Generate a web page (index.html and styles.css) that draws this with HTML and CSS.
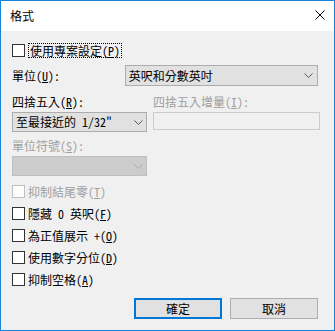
FILE: index.html
```html
<!DOCTYPE html>
<html lang="zh-Hant">
<head>
    <meta charset="UTF-8">
    <title>格式</title>
    <link rel="stylesheet" href="styles.css">
</head>
<body>
    <div class="dialog">
        <div class="titlebar">
            <span class="title">格式</span>
            <svg class="close" width="10" height="10" viewBox="0 0 10 10">
                <path d="M0.5 0.5 L9.5 9.5 M9.5 0.5 L0.5 9.5" stroke="#000" stroke-width="1" fill="none"/>
            </svg>
        </div>

        <div class="content">
            <div class="check">
                <span class="box"></span>
                <span class="focus">使用專案設定(<u>P</u>)</span>
            </div>

            <div class="unit-row">
                <span class="unit-label">單位(<u>U</u>):</span>
                <div class="select wide">
                    <span>英呎和分數英吋</span>
                    <svg class="chevron" width="9" height="5" viewBox="0 0 9 5"><polyline points="0.5,0.5 4.5,4.5 8.5,0.5" /></svg>
                </div>
            </div>

            <div class="round-row">
                <div class="field">
                    <span class="label">四捨五入(<u>R</u>):</span>
                    <div class="select narrow">
                        <span>至最接近的 1/32"</span>
                        <svg class="chevron" width="9" height="5" viewBox="0 0 9 5"><polyline points="0.5,0.5 4.5,4.5 8.5,0.5" /></svg>
                    </div>
                </div>
                <div class="field disabled">
                    <span class="label">四捨五入增量(<u>I</u>):</span>
                    <div class="input"></div>
                </div>
            </div>

            <div class="field disabled symbol">
                <span class="label">單位符號(<u>S</u>):</span>
                <div class="select narrow off">
                    <span></span>
                    <svg class="chevron" width="9" height="5" viewBox="0 0 9 5"><polyline points="0.5,0.5 4.5,4.5 8.5,0.5" /></svg>
                </div>
            </div>

            <div class="checks">
                <div class="check disabled">
                    <span class="box"></span>
                    <span>抑制結尾零(<u>T</u>)</span>
                </div>
                <div class="check">
                    <span class="box"></span>
                    <span>隱藏 0 英呎(<u>F</u>)</span>
                </div>
                <div class="check">
                    <span class="box"></span>
                    <span>為正值展示 +(<u>O</u>)</span>
                </div>
                <div class="check">
                    <span class="box"></span>
                    <span>使用數字分位(<u>D</u>)</span>
                </div>
                <div class="check">
                    <span class="box"></span>
                    <span>抑制空格(<u>A</u>)</span>
                </div>
            </div>

            <div class="buttons">
                <button class="btn default">確定</button>
                <button class="btn">取消</button>
            </div>
        </div>
    </div>
</body>
</html>
```

FILE: styles.css
```css
* {
    margin: 0;
    padding: 0;
    box-sizing: border-box;
}

body {
    background: #f0f0f0;
    font-family: "Noto Sans CJK TC", "Noto Sans CJK SC", sans-serif;
    font-feature-settings: "hwid";
    font-size: 12px;
    color: #000;
}

.dialog {
    width: 335px;
    height: 331px;
    border: 1px solid #1883d7;
    background: #f0f0f0;
    display: flex;
    flex-direction: column;
}

.titlebar {
    height: 30px;
    background: #fff;
    display: flex;
    align-items: center;
    justify-content: space-between;
    padding: 0 9px;
}

.title {
    line-height: 14px;
}

.close {
    margin-top: -2px;
}

.content {
    padding: 12px 16px 0 11px;
    display: flex;
    flex-direction: column;
}

/* checkboxes */
.check {
    display: flex;
    align-items: center;
    height: 15px;
    gap: 3px;
    line-height: 13px;
}

.box {
    width: 13px;
    height: 13px;
    border: 1px solid #333;
    background: #fff;
}

.focus {
    border: 1px dotted #000;
    padding: 0 1px;
    margin-left: 0;
}

.check.disabled {
    color: #a0a0a0;
}

.check.disabled .box {
    border-color: #c0c0c0;
    background: #fcfcfc;
}

.checks {
    margin-top: 8px;
    display: flex;
    flex-direction: column;
    gap: 7px;
}

/* selects */
.unit-row {
    margin-top: 7px;
    display: flex;
    align-items: center;
    height: 21px;
}

.unit-label {
    width: 115px;
}

.select {
    display: flex;
    align-items: center;
    justify-content: space-between;
    background: #e1e1e1;
    border: 1px solid #adadad;
    padding: 0 4px 0 3px;
    line-height: 14px;
}

.select.wide {
    width: 197px;
    height: 21px;
}

.select.narrow {
    width: 135px;
    height: 20px;
    padding-right: 3px;
}

.select.off {
    background: #cccccc;
    border-color: #bfbfbf;
}

.chevron polyline {
    fill: none;
    stroke: #555;
    stroke-width: 1;
}

.select.off .chevron polyline {
    stroke: #a8a8a8;
}

.round-row {
    margin-top: 9px;
    display: flex;
    gap: 6px;
}

.field {
    display: flex;
    flex-direction: column;
    gap: 3px;
}

.field .label {
    line-height: 14px;
}

.field.disabled .label {
    color: #a0a0a0;
}

.field.symbol {
    margin-top: 7px;
}

.input {
    width: 167px;
    height: 18px;
    border: 1px solid #cccccc;
    background: #f0f0f0;
}

/* buttons */
.buttons {
    margin-top: 11px;
    display: flex;
    justify-content: flex-end;
    gap: 8px;
}

.btn {
    width: 88px;
    height: 21px;
    background: #e1e1e1;
    border: 1px solid #adadad;
    font-family: inherit;
    font-size: 12px;
    color: #000;
}

.btn.default {
    border: 2px solid #0078d7;
}

u {
    text-underline-offset: 1px;
}
```
